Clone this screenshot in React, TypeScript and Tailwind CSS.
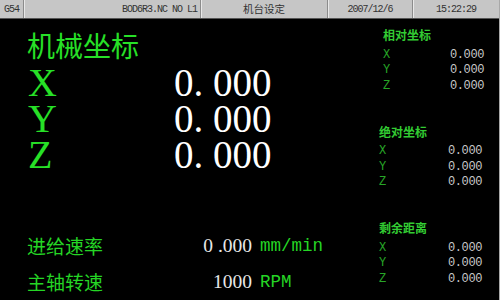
const serif = "font-['Liberation_Serif',serif]";
const mono = "font-['Liberation_Mono',monospace]";
const cjk = "font-['Noto_Sans_CJK_SC',sans-serif]";

function Num({ value, className }: { value: string; className?: string }) {
  // half-width digits like the controller font: the dot takes a full cell
  const [a, b] = value.split('.');
  return (
    <span className={className}>
      {a}
      {b !== undefined && <span className="inline-block w-[0.5em]">.</span>}
      {b}
    </span>
  );
}

function Section({
  title,
  className,
}: {
  title: string;
  className: string;
}) {
  return (
    <div className={className}>
      <div
        className={`${cjk} mb-[4px] text-[12px] leading-[16px] font-bold text-[#33cc33]`}
      >
        {title}
      </div>
      {['X', 'Y', 'Z'].map((axis) => (
        <div key={axis} className="flex h-[15.5px] items-center justify-between">
          <span className={`${mono} text-[12px] text-[#27a527]`}>{axis}</span>
          <span
            className={`${mono} text-[12px] tracking-[-0.4px] text-[#c8c8c8]`}
          >
            0.000
          </span>
        </div>
      ))}
    </div>
  );
}

export default function App() {
  return (
    <div className="flex h-[300px] w-[500px] flex-col overflow-hidden border-r border-[#a8a8a8] bg-black">
      <div className="flex h-[19px] shrink-0 items-stretch border-b border-[#555] bg-[#c6c6c6] text-[#333]">
        <div
          className={`${mono} flex w-[23px] items-center pl-[4px] text-[10px] tracking-[-1px]`}
        >
          G54
        </div>
        <div
          className={`${mono} flex w-[177px] items-center justify-end border-l border-[#8c8c8c] pr-[3px] text-[10px] tracking-[-1px] shadow-[inset_1px_0_0_#e8e8e8]`}
        >
          BOD6R3.NC NO L1
        </div>
        <div
          className={`${cjk} flex w-[127px] items-center justify-center border-l border-[#8c8c8c] text-[10.5px] shadow-[inset_1px_0_0_#e8e8e8]`}
        >
          机台设定
        </div>
        <div
          className={`${mono} flex w-[85px] items-center justify-center border-l border-[#8c8c8c] text-[10px] tracking-[-1px] shadow-[inset_1px_0_0_#e8e8e8]`}
        >
          2007/12/6
        </div>
        <div
          className={`${mono} flex flex-1 items-center justify-center border-l border-[#8c8c8c] text-[10px] tracking-[-1px] shadow-[inset_1px_0_0_#e8e8e8]`}
        >
          15:22:29
        </div>
      </div>

      <div className="flex flex-1">
        <div className="w-[372px] pt-[10px] pl-[27px]">
          <div className={`${cjk} text-[28px] leading-[32px] text-[#27e027]`}>
            机械坐标
          </div>
          <div className="mt-[4px]">
            {['X', 'Y', 'Z'].map((axis) => (
              <div key={axis} className="flex h-[36px] items-center">
                <span
                  className={`${serif} w-[147px] pl-px text-[40px] leading-[36px] text-[#27e027]`}
                >
                  {axis}
                </span>
                <Num
                  value="0.000"
                  className={`${serif} text-[39px] leading-[36px] text-white`}
                />
              </div>
            ))}
          </div>

          <div className="mt-[55px]">
            {[
              ['进给速率', '0.000', 'mm/min'],
              ['主轴转速', '1000', 'RPM'],
            ].map(([label, value, unit]) => (
              <div key={label} className="flex h-[36px] items-center">
                <span
                  className={`${cjk} w-[163px] text-[19px] leading-[36px] text-[#25d525]`}
                >
                  {label}
                </span>
                <span className="w-[62px] text-right">
                  <Num
                    value={value}
                    className={`${serif} text-[19.5px] text-[#e8e8e8]`}
                  />
                </span>
                <span
                  className={`${mono} ml-[8px] text-[17.5px] text-[#25d525]`}
                >
                  {unit}
                </span>
              </div>
            ))}
          </div>
        </div>

        <div className="flex-1 pt-[8px]">
          <Section title="相对坐标" className="pr-[15px] pl-[11px]" />
          <Section title="绝对坐标" className="mt-[30px] pr-[17px] pl-[7px]" />
          <Section title="剩余距离" className="mt-[30px] pr-[17px] pl-[7px]" />
        </div>
      </div>
    </div>
  );
}
